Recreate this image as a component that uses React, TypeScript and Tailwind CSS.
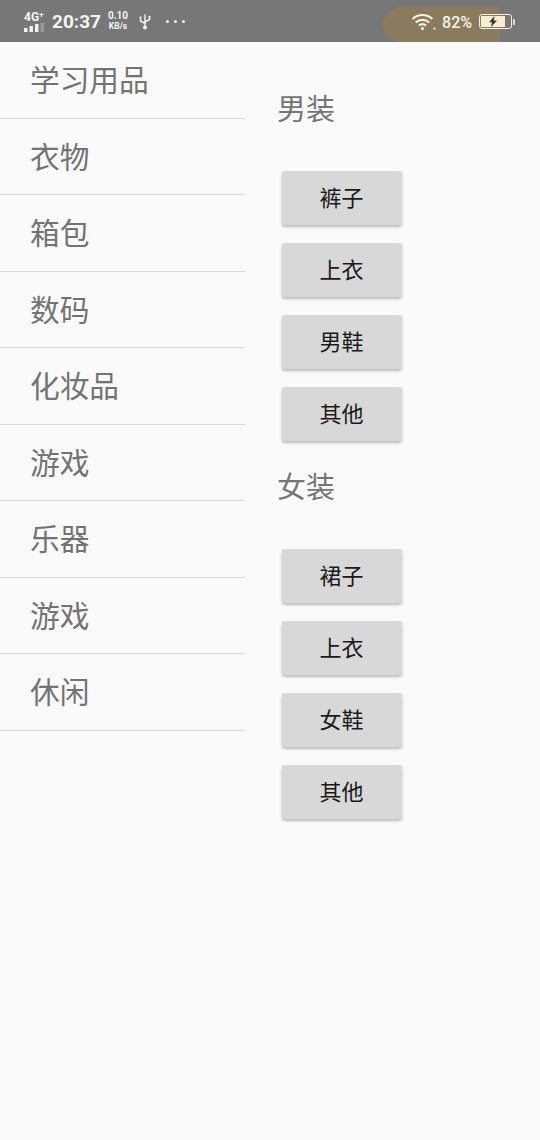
const categories = ["学习用品", "衣物", "箱包", "数码", "化妆品", "游戏", "乐器", "游戏", "休闲"];
const cjk = "font-['Roboto','Noto_Sans_CJK_SC',sans-serif]";

function StatusBar() {
  return (
    <div className="relative flex h-[42px] items-center bg-[#777777] text-[#f5f5f5] font-['Roboto','Liberation_Sans',sans-serif]">
      {/* the tan blob behind wifi / battery */}
      <div className="absolute left-[383px] top-[7px] h-[35px] w-[117px] rounded-tl-[18px] rounded-bl-[18px] rounded-tr-[4px] bg-[#8b7b5e]" />
      <div className="relative ml-[24px] flex w-[21px] flex-col items-start pt-[1px]">
        <span className="text-[12px] leading-[11px] font-bold">4G⁺</span>
        <svg width="22" height="9" viewBox="0 0 22 9" fill="#f0f0f0">
          <rect x="0" y="5" width="3.500" height="4" />
          <rect x="5.500" y="3" width="3.500" height="6" />
          <rect x="11" y="1" width="3.500" height="8" />
          <rect x="16.500" y="0" width="3.500" height="9" fill="#9a9a9a" />
        </svg>
      </div>
      <span className="relative ml-[7px] text-[19px] leading-none font-bold">20:37</span>
      <div className="relative ml-[7px] flex flex-col items-center text-[10px] leading-[10px] font-bold">
        <span>0.10</span>
        <span className="text-[8.5px]">KB/s</span>
      </div>
      <svg className="relative ml-[11px]" width="12" height="17" viewBox="0 0 12 16" fill="none" stroke="#f0f0f0" strokeWidth="1.500">
        <path d="M6 1v13" />
        <path d="M1.500 5v2.500l4.500 2.500M10.500 4.500v1.500l-4.500 2.500" />
        <circle cx="6" cy="14" r="1.300" fill="#f0f0f0" />
        <rect x="0.500" y="3" width="2" height="2" fill="#f0f0f0" stroke="none" />
        <circle cx="10.500" cy="3.500" r="1.200" fill="#f0f0f0" stroke="none" />
      </svg>
      <div className="relative ml-[15px] flex gap-[5px]">
        <span className="h-[3px] w-[3px] rounded-full bg-[#f0f0f0]" />
        <span className="h-[3px] w-[3px] rounded-full bg-[#f0f0f0]" />
        <span className="h-[3px] w-[3px] rounded-full bg-[#f0f0f0]" />
      </div>
      <div className="relative ml-auto mr-[25px] flex items-center pt-[1px]">
        <svg width="25" height="19" viewBox="0 0 24 18" fill="none" stroke="#f5f0e4" strokeWidth="2">
          <path d="M1.500 6.500a14 14 0 0 1 19 0" />
          <path d="M4.500 10a9.500 9.500 0 0 1 13 0" />
          <path d="M7.500 13a5.500 5.500 0 0 1 7 0" />
          <circle cx="11" cy="15.800" r="1.500" fill="#f5f0e4" stroke="none" />
          <circle cx="22.500" cy="15.800" r="1.100" fill="#f5f0e4" stroke="none" />
        </svg>
        <span className="ml-[6px] pt-[2px] text-[16px] leading-none font-medium text-[#f7f2e6]">82%</span>
        <div className="relative ml-[7px] flex h-[15px] w-[33px] items-center rounded-[3px] border border-[#f5f0e4] p-[1px]">
          <div className="flex h-full w-[82%] items-center justify-center bg-[#f8edcf]">
            <svg width="10" height="11" viewBox="0 0 10 11" fill="#333333">
              <path d="M6.500 0 1 6.200h3L3 11l6-6.500H5.800z" />
            </svg>
          </div>
        </div>
        <div className="ml-[1px] h-[6px] w-[2px] rounded-r-[1px] bg-[#e0dccf]" />
      </div>
    </div>
  );
}

function Section({ title, items, className }: { title: string; items: string[]; className: string }) {
  return (
    <div className={className}>
      <div className="h-[40px] text-[29px] leading-[42px] text-[#757575]">{title}</div>
      <div className="mt-[42px] ml-[5px] flex flex-col gap-[18px]">
        {items.map((item, i) => (
          <button
            key={i}
            className="h-[54px] w-[120px] rounded-[3px] bg-[#d8d8d8] pt-[1px] pr-[1px] text-[22px] text-[#1a1a1a] shadow-[0_2px_3px_rgba(0,0,0,0.25)]"
          >
            {item}
          </button>
        ))}
      </div>
    </div>
  );
}

export default function App() {
  return (
    <div className={`h-[1140px] w-[540px] overflow-hidden bg-[#fafafa] ${cjk}`}>
      <StatusBar />
      <div className="flex">
        <div className="w-[245px]">
          {categories.map((c, i) => (
            <div
              key={i}
              className="flex h-[76.5px] items-center border-b border-[#d9d9d9] pt-[4px] pl-[30px] text-[29.7px] text-[#737373]"
            >
              {c}
            </div>
          ))}
        </div>
        <div className="pl-[32px]">
          <Section title="男装" items={["裤子", "上衣", "男鞋", "其他"]} className="mt-[47px]" />
          <Section title="女装" items={["裙子", "上衣", "女鞋", "其他"]} className="mt-[26px]" />
        </div>
      </div>
    </div>
  );
}
